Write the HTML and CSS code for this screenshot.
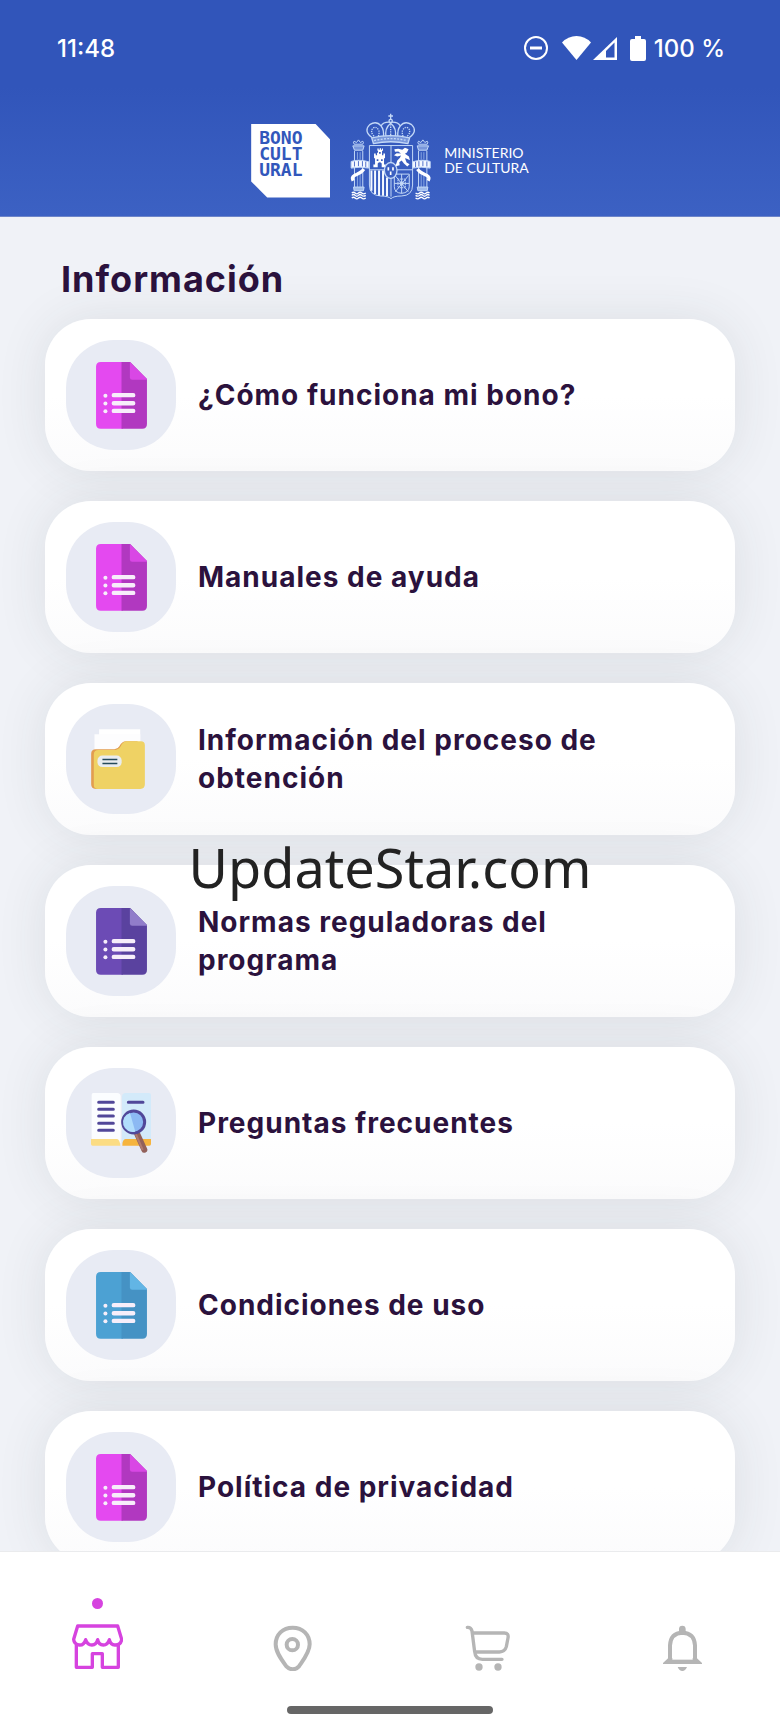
FILE: index.html
```html
<!DOCTYPE html>
<html lang="es">
<head>
  <meta charset="UTF-8" />
  <meta name="viewport" content="width=device-width, initial-scale=1.0"/>
  <title>Información</title>
  <link rel="stylesheet" href="styles.css">
</head>
<body>
  <!-- Shared document icon -->
  <svg class="sprite" aria-hidden="true">
    <symbol id="doc" viewBox="0 0 152 200">
      <path class="doc-left" d="M14 0H80V199H14Q0 199 0 185V14Q0 0 14 0Z"/>
      <path class="doc-right" d="M76 0H102L152 51V185Q152 199 138 199H76Z"/>
      <path class="doc-fold" d="M101 0L152 51V53H108Q101 53 101 46Z"/>
      <g fill="#f7eefa">
        <circle cx="28" cy="101" r="6"/>
        <circle cx="28" cy="124" r="6"/>
        <circle cx="28" cy="147" r="6"/>
      </g>
      <path d="M53 99H111M53 123H111M53 146H111" stroke="#f7eefa" stroke-width="13" stroke-linecap="round"/>
    </symbol>
  </svg>

  <header>
    <div class="status-bar">
      <span>11:48</span>
      <div class="status-icons">
        <svg width="24" height="24" viewBox="0 0 24 24" fill="none" stroke="#fff" stroke-width="2">
          <circle cx="12" cy="12" r="11"/>
          <path d="M6 12H18" stroke-width="3"/>
        </svg>
        <svg class="wifi" width="56" height="24" viewBox="0 0 56 24">
          <path d="M0 6.500Q6 0 14.500 0T29 6.500L14.500 24Z" fill="#fff"/>
          <path d="M31 24L55 1V24Z" fill="#fff"/>
          <path d="M44 15L52.500 6.500V21.500H44Z" fill="#3155ba"/>
        </svg>
        <svg width="16" height="25" viewBox="0 0 16 25">
          <path d="M5 0H11V3H14Q16 3 16 5V23Q16 25 14 25H2Q0 25 0 23V5Q0 3 2 3H5Z" fill="#fff"/>
        </svg>
        <span>100 %</span>
      </div>
    </div>

    <div class="logos">
      <div class="bono">BONO<br>CULT<br>URAL</div>
      <svg class="crest" viewBox="335 38 246 262" role="img" aria-label="Escudo de España">
        <!-- Crown -->
        <g fill="none" stroke="#c3d8f7" stroke-width="4">
          <path d="M457 40V58M450 47H464"/>
          <circle cx="457" cy="62" r="5"/>
          <path d="M401 112Q374 92 394 73Q414 60 428 77Q438 88 435 112"/>
          <path d="M513 112Q540 92 520 73Q500 60 486 77Q476 88 479 112"/>
          <path d="M428 77Q435 64 457 66Q479 64 486 77M443 112Q438 84 457 69Q476 84 471 112"/>
          <path d="M407 108Q394 95 404 83Q414 77 421 90Q424 99 419 110M507 108Q520 95 510 83Q500 77 493 90Q490 99 495 110" stroke-dasharray="4 3"/>
          <path d="M400 113Q457 99 514 113L509 130Q457 119 405 130Z" fill="#7896db"/>
          <path d="M407 121Q457 109 507 121" stroke-dasharray="6 4"/>
          <path d="M457 72V108" stroke-dasharray="4 3"/>
        </g>
        <!-- Shield -->
        <path d="M393 136H523V255Q523 287 489 288Q466 288 458 296Q450 288 427 288Q393 286 393 255Z" fill="none" stroke="#c3d8f7" stroke-width="3"/>
        <path d="M458 136V290M393 209H523" stroke="#c3d8f7" stroke-width="3"/>
        <path d="M399 211V272M410 211V282M422 211V287M434 211V287M446 232V288" stroke="#f4f8ff" stroke-width="6"/>
        <path d="M405 201V193H410V174H407V160H412V165H416V158H419V152H417V145H421V149H424V144H428V149H431V145H434V152H431V165H435V160H440V174H437V193H442V201H430V190Q424 182 418 190V201Z" fill="#fff"/>
        <path d="M422 158H427M415 180H420M428 180H433" stroke="#3659bd" stroke-width="5"/>
        <path d="M492 149L500 143L511 147L506 157L500 161L512 169L515 180L506 176L500 174L505 187L514 192L507 199L497 190L490 181L483 186L484 195L470 199L474 190L477 181L485 173L488 166L477 169L467 165L475 159L488 160L480 154L470 155L468 147L480 146Z" fill="#fff"/>
        <g fill="none" stroke="#c3d8f7" stroke-width="3">
          <path d="M468 222H513V260Q512 278 490 280Q468 278 468 260Z"/>
          <path d="M490 222V280M468 250H513M470 226L510 275M511 226L471 275"/>
          <path d="M479 237H501V263H479Z" stroke-dasharray="4 2"/>
          <circle cx="490" cy="250" r="5" fill="#c3d8f7"/>
        </g>
        <ellipse cx="457" cy="211" rx="19" ry="24" fill="#3c60c1" stroke="#c3d8f7" stroke-width="4"/>
        <path d="M450 201V211M464 201V211M457 214V225" stroke="#fff" stroke-width="5"/>
        <!-- Pillars of Hercules -->
        <g id="pillar" fill="none" stroke="#c3d8f7" stroke-width="3">
          <path d="M347 132Q343 124 347 123L354 127L360 119L366 127L373 123Q377 126 373 132Z"/>
          <path d="M343 137H377L373 150H348Z" fill="#7896db"/>
          <path d="M348 152V270M373 152V270"/>
          <path d="M357 156V178M365 156V178M357 216V266M365 216V266" stroke="#87a5e1"/>
          <path d="M345 261H377L375 272H347Z" fill="#9fbbeb"/>
          <path d="M340 279Q345 274 350 279T360 279T370 279T382 279M340 286Q345 281 350 286T360 286T370 286T382 286M340 294Q345 289 350 294T360 294T370 294T382 294" stroke="#fff" stroke-width="4"/>
          <path d="M338 204V184Q361 176 391 185V204Q365 198 338 204Z" fill="#f4f8ff"/>
          <path d="M348 184V199M360 183V198M372 183V199M382 185V201" stroke="#5272cb"/>
          <path d="M376 207Q370 217 348 226Q338 231 344 242" stroke="#fff" stroke-width="10"/>
        </g>
        <use href="#pillar" transform="translate(914 0) scale(-1 1)"/>
      </svg>
      <div class="ministry">MINISTERIO<br>DE CULTURA</div>
    </div>
  </header>

  <main>
    <h1>Información</h1>
    <div class="card-list">
      <a class="card" href="#funciona">
        <span class="tile"><svg class="doc pink"><use href="#doc"/></svg></span>
        <span class="label">¿Cómo funciona mi bono?</span>
      </a>
      <a class="card" href="#manuales">
        <span class="tile"><svg class="doc pink"><use href="#doc"/></svg></span>
        <span class="label">Manuales de ayuda</span>
      </a>
      <a class="card" href="#proceso">
        <span class="tile">
          <svg width="60" height="60" viewBox="0 0 180 181">
            <path d="M24 1H148V80H24Z" fill="#fff"/>
            <path d="M10 16H148V100H10Z" fill="#fdfdfe"/>
            <path d="M14 61H70Q81 60 85 52Q93 37 105 37H140V181H14Q0 181 0 167V75Q0 61 14 61Z" fill="#e29d50"/>
            <path d="M22 63H72Q84 62 89 52Q96 37 108 37H150Q162 37 162 49V167Q162 181 148 181H20Q8 181 8 169V77Q8 63 22 63Z" fill="#efd264"/>
            <rect x="19" y="80" width="73" height="35" rx="15" fill="#e9edf0"/>
            <path d="M34 92H79M34 104H79" stroke="#244a5b" stroke-width="5"/>
          </svg>
        </span>
        <span class="label">Información del proceso de obtención</span>
      </a>
      <a class="card" href="#normas">
        <span class="tile"><svg class="doc purple"><use href="#doc"/></svg></span>
        <span class="label">Normas reguladoras del programa</span>
      </a>
      <a class="card" href="#preguntas">
        <span class="tile">
          <svg width="60" height="60" viewBox="0 0 180 180">
            <path d="M2 5Q2 0 7 0H78Q89 0 89 11V150H2Z" fill="#fbfdff"/>
            <path d="M93 11Q93 0 104 0H174Q180 0 180 6V150H93Z" fill="#d3eafa"/>
            <path d="M0 138H78Q86 138 88 158H5Q0 158 0 153Z" fill="#fbdc83"/>
            <path d="M104 138H180V153Q180 158 175 158H94Q94 138 104 138Z" fill="#f6b43e"/>
            <path d="M23 28H67M23 49H67M23 69H67M23 91H67M23 112H67M112 28H156" stroke="#514799" stroke-width="9" stroke-linecap="round"/>
            <path d="M139 124L160 170" stroke="#92605a" stroke-width="18" stroke-linecap="round"/>
            <path d="M134 122L155 171" stroke="#b07a70" stroke-width="6"/>
            <circle cx="128" cy="87" r="33" fill="#8cb9f3" stroke="#514799" stroke-width="9"/>
            <path d="M117 60A29 29 0 0 0 133 116Z" fill="#b1ddfc"/>
          </svg>
        </span>
        <span class="label">Preguntas frecuentes</span>
      </a>
      <a class="card" href="#condiciones">
        <span class="tile"><svg class="doc blue"><use href="#doc"/></svg></span>
        <span class="label">Condiciones de uso</span>
      </a>
      <a class="card" href="#privacidad">
        <span class="tile"><svg class="doc pink"><use href="#doc"/></svg></span>
        <span class="label">Política de privacidad</span>
      </a>
    </div>
  </main>

  <nav>
    <div class="tabs">
      <a class="active" href="#inicio" aria-label="Inicio">
        <svg viewBox="0 0 153 144">
          <path d="M17 9H137L149 49Q147 65 130 66Q116 67 112 50Q107 66 94 66Q80 66 77 50Q73 66 60 66Q46 66 41 50Q36 67 22 66Q6 64 5 49ZM13 64V133H61V92H91V133H139V64" fill="none" stroke="currentColor" stroke-width="10" stroke-linejoin="round"/>
        </svg>
      </a>
      <a href="#mapa" aria-label="Mapa">
        <svg viewBox="802 246 153 144">
          <path d="M879 260C849 260 828 281 828 310C828 334 846 357 860 376C872 388 887 388 898 376C911 357 930 334 930 310C930 281 909 260 879 260Z" fill="none" stroke="currentColor" stroke-width="12"/>
          <circle cx="878" cy="311" r="17" fill="none" stroke="currentColor" stroke-width="12"/>
        </svg>
      </a>
      <a href="#carrito" aria-label="Carrito">
        <svg viewBox="216 246 153 144" fill="none" stroke="currentColor" stroke-width="10" stroke-linecap="round" stroke-linejoin="round">
          <path d="M232 259Q243 258 246 270L254 332Q256 355 277 355H336M248 276H343Q357 276 354 291L349 317Q345 332 328 333H255"/>
          <circle cx="267" cy="378" r="11" fill="currentColor" stroke="none"/>
          <circle cx="324" cy="378" r="11" fill="currentColor" stroke="none"/>
        </svg>
      </a>
      <a href="#avisos" aria-label="Avisos">
        <svg viewBox="801 246 153 144">
          <path d="M840 362V313Q842 276 877 275Q913 276 915 313V362Z" fill="none" stroke="currentColor" stroke-width="12"/>
          <path d="M819 369V366L835 351H920L936 366V369Z" fill="currentColor"/>
          <path d="M847 356V320H908V356Z" fill="#fff"/>
          <path d="M867 280V264A10 10 0 0 1 887 264V280ZM863 378H891Q886 390 877 390Q868 390 863 378Z" fill="currentColor"/>
        </svg>
      </a>
    </div>
    <div class="home-bar"></div>
  </nav>

  <div class="watermark">UpdateStar.com</div>
</body>
</html>
```
FILE: styles.css
```css
* {
  box-sizing: border-box;
}

body {
  margin: 0;
  height: 100vh;
  overflow: hidden;
  display: flex;
  flex-direction: column;
  position: relative;
  background-color: #f0f2f7;
  color: #2b123d;
  font-family: Inter, sans-serif;
}

a {
  color: inherit;
  text-decoration: none;
}

svg {
  display: block;
}

.sprite {
  position: absolute;
  width: 0;
  height: 0;
}

/* Header */
header {
  flex: none;
  padding-bottom: 16px;
  background: linear-gradient(#3155ba 40%, #3c61c3);
  border-bottom: 1px solid #6d85c9;
  color: #fff;
}

.status-bar {
  display: flex;
  justify-content: space-between;
  align-items: center;
  height: 96px;
  padding: 0 55px 0 57px;
  font-size: 24px;
  font-weight: 500;
}

.status-icons {
  display: flex;
  align-items: center;
  gap: 8px;
}

.wifi {
  margin: 0 4px 0 6px;
}

.logos {
  display: flex;
  justify-content: center;
  align-items: center;
  padding-top: 17px;
}

.bono {
  width: 79px;
  height: 74px;
  margin-top: 8px;
  padding: 6px 8px;
  background-color: #fff;
  clip-path: polygon(0 0, 64px 0, 100% 16px, 100% 100%, 16px 100%, 0 58px);
  color: #3257bb;
  font-family: "DejaVu Sans Mono", monospace;
  font-size: 18px;
  font-weight: bold;
  line-height: 16px;
}

.crest {
  width: 82px;
  height: 87px;
  margin: 0 12px 0 20px;
}

.ministry {
  padding-top: 6px;
  font-family: Lato, sans-serif;
  font-size: 14px;
  line-height: 15px;
}

/* Content */
main {
  flex: 1;
  min-height: 0;
  overflow: hidden;
  padding: 38px 45px 0;
}

h1 {
  margin: 0 0 16px 16px;
  font-size: 36px;
  line-height: 48px;
  letter-spacing: 1px;
}

.card-list {
  display: flex;
  flex-direction: column;
  gap: 30px;
}

.card {
  display: flex;
  align-items: center;
  gap: 22px;
  min-height: 152px;
  padding: 20px 60px 20px 21px;
  border-radius: 46px;
  background: linear-gradient(#fff 50%, #fbfbfc);
  box-shadow: 0 0 50px rgba(50, 60, 55, 0.1);
}

.tile {
  flex: none;
  display: flex;
  align-items: center;
  justify-content: center;
  width: 110px;
  height: 110px;
  border-radius: 48px;
  background-color: #e8ebf4;
}

.label {
  font-size: 28px;
  font-weight: bold;
  line-height: 38px;
  letter-spacing: 1px;
}

.doc {
  width: 51px;
  height: 67px;
}

.pink {
  --left: #e449f0;
  --right: #b138c0;
  --fold: #d947e5;
}

.purple {
  --left: #6c4bb5;
  --right: #5a429f;
  --fold: #917dca;
}

.blue {
  --left: #4ca1d3;
  --right: #4592c4;
  --fold: #62b5e5;
}

.doc-left {
  fill: var(--left);
}

.doc-right {
  fill: var(--right);
}

.doc-fold {
  fill: var(--fold);
}

/* Bottom navigation */
nav {
  flex: none;
  position: relative;
  padding: 71px 0 19px;
  background-color: #fff;
  border-top: 1px solid #eaebed;
}

.tabs {
  display: grid;
  grid-template-columns: repeat(4, 1fr);
  justify-items: center;
}

.tabs a {
  position: relative;
  color: #b5b5b5;
}

.tabs svg {
  width: 51px;
  height: 48px;
}

.tabs .active {
  color: #d643df;
}

.active::before {
  content: "";
  position: absolute;
  top: -25px;
  left: 20px;
  width: 11px;
  height: 11px;
  border-radius: 50%;
  background-color: #d643df;
}

.home-bar {
  width: 206px;
  height: 8px;
  margin: 35px auto 0;
  border-radius: 4px;
  background-color: #666;
}

.watermark {
  position: absolute;
  top: 50%;
  left: 50%;
  transform: translate(-50%, -50%);
  color: #222;
  font-family: "Noto Sans", sans-serif;
  font-size: 54px;
  line-height: 76px;
}
```
